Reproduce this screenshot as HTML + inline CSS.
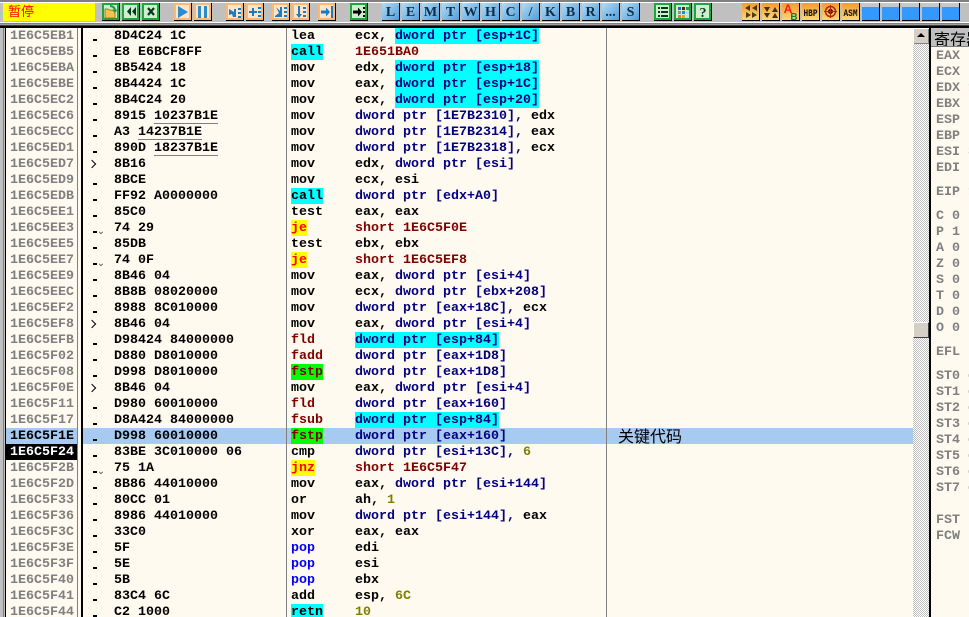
<!DOCTYPE html>
<html lang="zh"><head><meta charset="utf-8"><title>OllyDbg</title>
<style>
html,body{margin:0;padding:0;width:969px;height:617px;overflow:hidden;background:#c0c0c0}
body{position:relative;font-family:"Liberation Mono",monospace;font-size:13.33px;font-weight:700;line-height:16px}
.ab{position:absolute}
#list{position:absolute;left:0;top:28px;width:969px;height:589px;overflow:hidden}
.r{position:relative;height:16px;white-space:pre;line-height:18px}
.r span{position:absolute;top:0;height:16px}
.a{left:10px;color:#808080}
.d{left:93px;top:11px!important;width:4px;height:2px!important;background:#000}
.v{left:99px;top:11px!important;width:4px;height:3px!important}
.v::before{content:"";position:absolute;left:0;top:-1px;width:3px;height:3px;border-right:1px solid #444;border-bottom:1px solid #444;transform:rotate(45deg) scale(.75)}
.t{left:91px;top:4px!important;width:7px;height:8px!important}
.t::before{content:"";position:absolute;left:-2px;top:1px;width:5px;height:5px;border-right:1px solid #000;border-top:1px solid #000;transform:rotate(45deg)}
.h{left:114px;color:#000}
.m{left:291px;color:#000}
.g{left:355px;color:#000}
.x{left:395px;color:#000080;background:#0ff}
.n{color:#000080}
.g.n{color:#000080}
.g.mr,.m.mr{color:#800000}
.ol{color:#808000}
.cy{background:#0ff;width:32px}
.gr{background:#0f0;width:32px;color:#800000!important}
.ye{background:#ff0;color:#f00!important;width:16px}
.pb{color:#00f!important}
.u{position:absolute;height:1px!important;top:15px!important;background:#808080}
.rg{position:absolute;left:936px;margin-top:2px;color:#808080;white-space:pre;height:16px;line-height:16px}
</style></head>
<body>
<svg class="ab" style="left:0;top:0" width="969" height="27" viewBox="0 0 969 27" font-family="Liberation Serif,serif" font-weight="700">
<defs>
<linearGradient id="bl" x1="0" y1="0" x2="1" y2="1"><stop offset="0" stop-color="#b4dcf4"/><stop offset="1" stop-color="#4f9fdc"/></linearGradient>
<linearGradient id="og" x1="0" y1="0" x2="0" y2="1"><stop offset="0" stop-color="#f69a30"/><stop offset="1" stop-color="#fbd877"/></linearGradient>
</defs>
<rect width="969" height="27" fill="#c0c0c0"/>
<rect y="0" width="969" height="2" fill="#808080"/><rect y="2" width="969" height="1" fill="#fff"/>
<rect y="22" width="969" height="1" fill="#fff"/>
<rect y="23" width="969" height="1" fill="#808080"/><rect y="24" width="969" height="1" fill="#a0a0a0"/><rect y="25" width="969" height="1" fill="#404040"/><rect y="26" width="969" height="1" fill="#000"/>
<rect x="3" y="3" width="92" height="18" fill="#ff0"/>
<!-- green -->
<g fill="#cfeecf" stroke="#1fa53f" stroke-width="2">
<rect x="103" y="4" width="15" height="15"/><rect x="123" y="4" width="15" height="15"/><rect x="143" y="4" width="15" height="15"/><rect x="351" y="4" width="15" height="15"/>
<rect x="655" y="4" width="15" height="15"/><rect x="675" y="4" width="15" height="15"/><rect x="695" y="4" width="15" height="15"/>
</g>
<!-- orange light -->
<g fill="#fde6cc" stroke="#f7b878" stroke-width="2">
<rect x="175" y="4" width="15" height="15"/><rect x="195" y="4" width="15" height="15"/><rect x="227" y="4" width="15" height="15"/><rect x="247" y="4" width="15" height="15"/><rect x="273" y="4" width="15" height="15"/><rect x="293" y="4" width="15" height="15"/><rect x="319" y="4" width="15" height="15"/>
</g>
<!-- letters bg -->
<g fill="url(#bl)">
<rect x="382" y="3" width="17" height="17"/><rect x="402" y="3" width="17" height="17"/><rect x="422" y="3" width="17" height="17"/><rect x="442" y="3" width="17" height="17"/><rect x="462" y="3" width="17" height="17"/><rect x="482" y="3" width="17" height="17"/><rect x="502" y="3" width="17" height="17"/><rect x="522" y="3" width="17" height="17"/><rect x="542" y="3" width="17" height="17"/><rect x="562" y="3" width="17" height="17"/><rect x="582" y="3" width="17" height="17"/><rect x="602" y="3" width="17" height="17"/><rect x="622" y="3" width="17" height="17"/>
</g>
<!-- orange gradient -->
<g fill="url(#og)">
<rect x="742" y="3" width="17" height="17"/><rect x="762" y="3" width="17" height="17"/><rect x="782" y="3" width="17" height="17"/><rect x="802" y="3" width="17" height="17"/><rect x="822" y="3" width="17" height="17"/><rect x="842" y="3" width="17" height="17"/>
</g>
<!-- blue -->
<g>
<rect x="862" y="3" width="17" height="4" fill="#c8c8c8"/><rect x="862" y="7" width="17" height="13" fill="#3399ff"/>
<rect x="882" y="3" width="17" height="4" fill="#c8c8c8"/><rect x="882" y="7" width="17" height="13" fill="#3399ff"/>
<rect x="902" y="3" width="17" height="4" fill="#c8c8c8"/><rect x="902" y="7" width="17" height="13" fill="#3399ff"/>
<rect x="922" y="3" width="17" height="4" fill="#c8c8c8"/><rect x="922" y="7" width="17" height="13" fill="#3399ff"/>
<rect x="942" y="3" width="17" height="4" fill="#c8c8c8"/><rect x="942" y="7" width="17" height="13" fill="#3399ff"/>
</g>
<!-- button shadows -->
<path fill="none" stroke="#000" stroke-width="1" d="M119.5 3V20.5H102M139.5 3V20.5H122M159.5 3V20.5H142M191.5 3V20.5H174M211.5 3V20.5H194M243.5 3V20.5H226M263.5 3V20.5H246M289.5 3V20.5H272M309.5 3V20.5H292M335.5 3V20.5H318M367.5 3V20.5H350M399.5 3V20.5H382M419.5 3V20.5H402M439.5 3V20.5H422M459.5 3V20.5H442M479.5 3V20.5H462M499.5 3V20.5H482M519.5 3V20.5H502M539.5 3V20.5H522M559.5 3V20.5H542M579.5 3V20.5H562M599.5 3V20.5H582M619.5 3V20.5H602M639.5 3V20.5H622M671.5 3V20.5H654M691.5 3V20.5H674M711.5 3V20.5H694M759.5 3V20.5H742M779.5 3V20.5H762M799.5 3V20.5H782M819.5 3V20.5H802M839.5 3V20.5H822M859.5 3V20.5H842M879.5 3V20.5H862M899.5 3V20.5H882M919.5 3V20.5H902M939.5 3V20.5H922M959.5 3V20.5H942"/>
<!-- green icons -->
<path d="M105 9h3l1 1h6v8h-10z" fill="#f6c24a" stroke="#8a6a10" stroke-width=".8"/>
<path d="M110 5q5 0 6 5l2-1-3 4-3-3 2 0q-1-3-4-3z" fill="#1c9c3c"/>
<path d="M131 7v9l-4-4.500zM136 7v9l-4-4.500z" fill="#06381a"/>
<path d="M148 8l6 7M154 8l-6 7" stroke="#06381a" stroke-width="2.200"/>
<path d="M353 10.500h5v-3l4 4.500-4 4.500v-3h-5zM363 7h2v2h-2zM363 11h2v2h-2zM363 15h2v2h-2z" fill="#000"/>
<path d="M658 7h2v2h-2zM658 11h2v2h-2zM658 15h2v2h-2zM661 7h7v2h-7zM661 11h7v2h-7zM661 15h7v2h-7z" fill="#063a1a"/>
<path d="M678 7h3v3h-3z" fill="#1a6ad0"/><path d="M682 7h3v3h-3z" fill="#303030"/><path d="M686 7h3v3h-3z" fill="#22a040"/><path d="M678 11h3v3h-3z" fill="#909090"/><path d="M682 11h3v3h-3z" fill="#3080e0"/><path d="M686 11h3v3h-3z" fill="#b0e0f8"/><path d="M678 15h3v3h-3z" fill="#e08020"/><path d="M682 15h3v3h-3z" fill="#f0a020"/><path d="M686 15h3v3h-3z" fill="#c0e0f0"/>
<text x="703" y="17" font-size="14" text-anchor="middle" fill="#06381a">?</text>
<!-- orange-light icons -->
<path d="M178 6l10 6-10 6z" fill="#2a8ccc"/>
<path d="M198 6h3v12h-3zM204 6h3v12h-3z" fill="#2a8ccc"/>
<path d="M229 9l5 3v-3l2 0v8h-3l-1-3-3 1zM238 8h3v2h-3zM238 12h3v2h-3zM238 16h3v2h-3z" fill="#1c7cc0"/>
<path d="M249 11h3v-3h2v3h3v2h-3v3h-2v-3h-3zM258 7h3v2h-3zM258 11h3v2h-3zM258 15h3v2h-3z" fill="#1c7cc0"/>
<path d="M276 7l4 4v-4h2v10h-7v-1l4-3zM284 7h3v2h-3zM284 11h3v2h-3zM284 15h3v2h-3z" fill="#1c7cc0"/>
<path d="M298 6h2v8h2l-3 4-3-4h2zM303 7h3v2h-3zM303 11h3v2h-3zM303 15h3v2h-3z" fill="#1c7cc0"/>
<path d="M321 10.500h5v-3l4 4.500-4 4.500v-3h-5zM331 6h2v12h-2z" fill="#1c7cc0"/>
<!-- letters -->
<g font-size="14" fill="#0f2c48" text-anchor="middle">
<text x="390.500" y="16">L</text><text x="410.500" y="16">E</text><text x="430.500" y="16">M</text><text x="450.500" y="16">T</text><text x="470.500" y="16">W</text><text x="490.500" y="16">H</text><text x="510.500" y="16">C</text><text x="530.500" y="16">/</text><text x="550.500" y="16">K</text><text x="570.500" y="16">B</text><text x="590.500" y="16">R</text><text x="610.500" y="16">...</text><text x="630.500" y="16">S</text>
</g>
<!-- orange-grad icons -->
<path d="M750 5v6l-5-3zM757 5v6l-5-3zM746 12v6l5-3zM752 12v6l5-3z" fill="#1a1a10" opacity=".8"/>
<path d="M764 7h6l-3 5zM764 13h6l-3 5zM772 12h6l-3-5zM772 18h6l-3-5z" fill="#1a1a10" opacity=".85"/>
<text x="788" y="13" font-size="12" fill="#f02020" text-anchor="middle" font-family="Liberation Sans,sans-serif">A</text>
<text x="794" y="20" font-size="10" fill="#108030" text-anchor="middle" font-family="Liberation Sans,sans-serif">B</text>
<text x="810.500" y="16" font-size="10" fill="#101010" text-anchor="middle" font-family="Liberation Mono,monospace" textLength="14" lengthAdjust="spacingAndGlyphs">HBP</text>
<circle cx="830.500" cy="11.500" r="5" fill="none" stroke="#c02010" stroke-width="1.500"/><circle cx="830.500" cy="11.500" r="2.500" fill="#301008"/><path d="M824 11.500h13M830.500 5v13" stroke="#c02010"/>
<text x="850.500" y="16" font-size="10" fill="#101010" text-anchor="middle" font-family="Liberation Mono,monospace" textLength="14" lengthAdjust="spacingAndGlyphs">ASM</text>
<text x="8" y="16" font-size="13" letter-spacing="0" fill="#f00" font-weight="400" font-family="WenQuanYi Zen Hei,Noto Sans CJK SC,sans-serif">暂停</text>
</svg>

<!-- panel bg -->
<div class="ab" style="left:0;top:27px;width:969px;height:590px;background:#fffaf0"></div>
<div class="ab" style="left:0;top:27px;width:969px;height:1px;background:#000"></div>
<div class="ab" style="left:0;top:28px;width:5px;height:589px;background:#c0c0c0"></div>
<div class="ab" style="left:3px;top:28px;width:1px;height:589px;background:#808080"></div>
<div class="ab" style="left:5px;top:28px;width:1px;height:589px;background:#000"></div>
<div class="ab" style="left:6px;top:428px;width:71px;height:16px;background:#a6caf0"></div>
<div class="ab" style="left:6px;top:444px;width:71px;height:16px;background:#000"></div>
<div class="ab" style="left:82px;top:428px;width:831px;height:16px;background:#a6caf0"></div>
<div class="ab" style="left:77px;top:28px;width:1px;height:589px;background:#808080"></div>
<div class="ab" style="left:81px;top:28px;width:2px;height:589px;background:#000"></div>
<div class="ab" style="left:286px;top:28px;width:1px;height:589px;background:#808080"></div>
<div class="ab" style="left:606px;top:28px;width:1px;height:589px;background:#808080"></div>

<div id="list">
<div class="r"><span class="a">1E6C5EB1</span><span class="d"></span><span class="h">8D4C24 1C</span><span class="m">lea</span><span class="g">ecx,</span><span class="x">dword ptr [esp+1C]</span></div>
<div class="r"><span class="a">1E6C5EB5</span><span class="d"></span><span class="h">E8 E6BCF8FF</span><span class="m cy">call</span><span class="g mr">1E651BA0</span></div>
<div class="r"><span class="a">1E6C5EBA</span><span class="d"></span><span class="h">8B5424 18</span><span class="m">mov</span><span class="g">edx,</span><span class="x">dword ptr [esp+18]</span></div>
<div class="r"><span class="a">1E6C5EBE</span><span class="d"></span><span class="h">8B4424 1C</span><span class="m">mov</span><span class="g">eax,</span><span class="x">dword ptr [esp+1C]</span></div>
<div class="r"><span class="a">1E6C5EC2</span><span class="d"></span><span class="h">8B4C24 20</span><span class="m">mov</span><span class="g">ecx,</span><span class="x">dword ptr [esp+20]</span></div>
<div class="r"><span class="a">1E6C5EC6</span><span class="d"></span><span class="h">8915 10237B1E</span><span class="u" style="left:154px;width:64px"></span><span class="m">mov</span><span class="g"><b class="n">dword ptr [1E7B2310],</b> edx</span></div>
<div class="r"><span class="a">1E6C5ECC</span><span class="d"></span><span class="h">A3 14237B1E</span><span class="u" style="left:138px;width:64px"></span><span class="m">mov</span><span class="g"><b class="n">dword ptr [1E7B2314],</b> eax</span></div>
<div class="r"><span class="a">1E6C5ED1</span><span class="d"></span><span class="h">890D 18237B1E</span><span class="u" style="left:154px;width:64px"></span><span class="m">mov</span><span class="g"><b class="n">dword ptr [1E7B2318],</b> ecx</span></div>
<div class="r"><span class="a">1E6C5ED7</span><span class="t"></span><span class="h">8B16</span><span class="m">mov</span><span class="g">edx, <b class="n">dword ptr [esi]</b></span></div>
<div class="r"><span class="a">1E6C5ED9</span><span class="d"></span><span class="h">8BCE</span><span class="m">mov</span><span class="g">ecx, esi</span></div>
<div class="r"><span class="a">1E6C5EDB</span><span class="d"></span><span class="h">FF92 A0000000</span><span class="m cy">call</span><span class="g n">dword ptr [edx+A0]</span></div>
<div class="r"><span class="a">1E6C5EE1</span><span class="d"></span><span class="h">85C0</span><span class="m">test</span><span class="g">eax, eax</span></div>
<div class="r"><span class="a">1E6C5EE3</span><span class="d"></span><span class="v"></span><span class="h">74 29</span><span class="m ye">je</span><span class="g mr">short 1E6C5F0E</span></div>
<div class="r"><span class="a">1E6C5EE5</span><span class="d"></span><span class="h">85DB</span><span class="m">test</span><span class="g">ebx, ebx</span></div>
<div class="r"><span class="a">1E6C5EE7</span><span class="d"></span><span class="v"></span><span class="h">74 0F</span><span class="m ye">je</span><span class="g mr">short 1E6C5EF8</span></div>
<div class="r"><span class="a">1E6C5EE9</span><span class="d"></span><span class="h">8B46 04</span><span class="m">mov</span><span class="g">eax, <b class="n">dword ptr [esi+4]</b></span></div>
<div class="r"><span class="a">1E6C5EEC</span><span class="d"></span><span class="h">8B8B 08020000</span><span class="m">mov</span><span class="g">ecx, <b class="n">dword ptr [ebx+208]</b></span></div>
<div class="r"><span class="a">1E6C5EF2</span><span class="d"></span><span class="h">8988 8C010000</span><span class="m">mov</span><span class="g"><b class="n">dword ptr [eax+18C],</b> ecx</span></div>
<div class="r"><span class="a">1E6C5EF8</span><span class="t"></span><span class="h">8B46 04</span><span class="m">mov</span><span class="g">eax, <b class="n">dword ptr [esi+4]</b></span></div>
<div class="r"><span class="a">1E6C5EFB</span><span class="d"></span><span class="h">D98424 84000000</span><span class="m mr">fld</span><span class="g n" style="background:#0ff">dword ptr [esp+84]</span></div>
<div class="r"><span class="a">1E6C5F02</span><span class="d"></span><span class="h">D880 D8010000</span><span class="m mr">fadd</span><span class="g n">dword ptr [eax+1D8]</span></div>
<div class="r"><span class="a">1E6C5F08</span><span class="d"></span><span class="h">D998 D8010000</span><span class="m gr">fstp</span><span class="g n">dword ptr [eax+1D8]</span></div>
<div class="r"><span class="a">1E6C5F0E</span><span class="t"></span><span class="h">8B46 04</span><span class="m">mov</span><span class="g">eax, <b class="n">dword ptr [esi+4]</b></span></div>
<div class="r"><span class="a">1E6C5F11</span><span class="d"></span><span class="h">D980 60010000</span><span class="m mr">fld</span><span class="g n">dword ptr [eax+160]</span></div>
<div class="r"><span class="a">1E6C5F17</span><span class="d"></span><span class="h">D8A424 84000000</span><span class="m mr">fsub</span><span class="g n" style="background:#0ff">dword ptr [esp+84]</span></div>
<div class="r"><span class="a" style="color:#000">1E6C5F1E</span><span class="d"></span><span class="h">D998 60010000</span><span class="m gr">fstp</span><span class="g n">dword ptr [eax+160]</span><span style="left:618px;top:-1px;line-height:16px;color:#000;font-weight:400;font-size:16px;font-family:'WenQuanYi Zen Hei','Noto Sans CJK SC',sans-serif">关键代码</span></div>
<div class="r"><span class="a" style="color:#fff">1E6C5F24</span><span class="d"></span><span class="h">83BE 3C010000 06</span><span class="m">cmp</span><span class="g"><b class="n">dword ptr [esi+13C],</b> <b class="ol">6</b></span></div>
<div class="r"><span class="a">1E6C5F2B</span><span class="d"></span><span class="v"></span><span class="h">75 1A</span><span class="m ye" style="width:24px">jnz</span><span class="g mr">short 1E6C5F47</span></div>
<div class="r"><span class="a">1E6C5F2D</span><span class="d"></span><span class="h">8B86 44010000</span><span class="m">mov</span><span class="g">eax, <b class="n">dword ptr [esi+144]</b></span></div>
<div class="r"><span class="a">1E6C5F33</span><span class="d"></span><span class="h">80CC 01</span><span class="m">or</span><span class="g">ah, <b class="ol">1</b></span></div>
<div class="r"><span class="a">1E6C5F36</span><span class="d"></span><span class="h">8986 44010000</span><span class="m">mov</span><span class="g"><b class="n">dword ptr [esi+144],</b> eax</span></div>
<div class="r"><span class="a">1E6C5F3C</span><span class="d"></span><span class="h">33C0</span><span class="m">xor</span><span class="g">eax, eax</span></div>
<div class="r"><span class="a">1E6C5F3E</span><span class="d"></span><span class="h">5F</span><span class="m pb">pop</span><span class="g">edi</span></div>
<div class="r"><span class="a">1E6C5F3F</span><span class="d"></span><span class="h">5E</span><span class="m pb">pop</span><span class="g">esi</span></div>
<div class="r"><span class="a">1E6C5F40</span><span class="d"></span><span class="h">5B</span><span class="m pb">pop</span><span class="g">ebx</span></div>
<div class="r"><span class="a">1E6C5F41</span><span class="d"></span><span class="h">83C4 6C</span><span class="m">add</span><span class="g">esp, <b class="ol">6C</b></span></div>
<div class="r"><span class="a">1E6C5F44</span><span class="d"></span><span class="h">C2 1000</span><span class="m cy">retn</span><span class="g ol">10</span></div>
</div>

<!-- scrollbar -->
<div class="ab" style="left:913px;top:28px;width:16px;height:589px;background:repeating-conic-gradient(#c0c0c0 0 25%,#fff 0 50%) 0 0/2px 2px"></div>
<div class="ab" style="left:913px;top:28px;width:15px;height:15px;background:#d4d0c8;border-top:1px solid #fff;border-left:1px solid #fff;box-shadow:inset -1px -1px 0 #808080"></div>
<div class="ab" style="left:917px;top:33px;width:0;height:0;border-left:4px solid transparent;border-right:4px solid transparent;border-bottom:4px solid #000"></div>
<div class="ab" style="left:913px;top:322px;width:14px;height:14px;background:#d4d0c8;border-top:1px solid #fff;border-left:1px solid #fff;border-right:1px solid #404040;border-bottom:1px solid #404040"></div>
<div class="ab" style="left:929px;top:27px;width:2px;height:590px;background:#000"></div>

<!-- registers -->
<div class="ab" style="left:931px;top:28px;width:38px;height:18px;background:#c0c0c0;overflow:hidden;color:#000;font-weight:400;font-size:16px;line-height:20px;white-space:nowrap;font-family:'WenQuanYi Zen Hei','Noto Sans CJK SC',sans-serif;padding-left:3px;box-sizing:border-box">寄存器</div>
<div class="ab" style="left:931px;top:46px;width:38px;height:1px;background:#808080"></div>
<div class="rg" style="top:47px">EAX</div>
<div class="rg" style="top:63px">ECX</div>
<div class="rg" style="top:79px">EDX 1</div>
<div class="rg" style="top:95px">EBX</div>
<div class="rg" style="top:111px">ESP</div>
<div class="rg" style="top:127px">EBP</div>
<div class="rg" style="top:143px">ESI 3</div>
<div class="rg" style="top:159px">EDI</div>
<div class="rg" style="top:183px">EIP 1</div>
<div class="rg" style="top:207px">C 0</div>
<div class="rg" style="top:223px">P 1</div>
<div class="rg" style="top:239px">A 0</div>
<div class="rg" style="top:255px">Z 0</div>
<div class="rg" style="top:271px">S 0</div>
<div class="rg" style="top:287px">T 0</div>
<div class="rg" style="top:303px">D 0</div>
<div class="rg" style="top:319px">O 0</div>
<div class="rg" style="top:343px">EFL</div>
<div class="rg" style="top:367px">ST0 e</div>
<div class="rg" style="top:383px">ST1 e</div>
<div class="rg" style="top:399px">ST2 e</div>
<div class="rg" style="top:415px">ST3 e</div>
<div class="rg" style="top:431px">ST4 e</div>
<div class="rg" style="top:447px">ST5 e</div>
<div class="rg" style="top:463px">ST6 e</div>
<div class="rg" style="top:479px">ST7 e</div>
<div class="rg" style="top:511px">FST</div>
<div class="rg" style="top:527px">FCW</div>
</body></html>
